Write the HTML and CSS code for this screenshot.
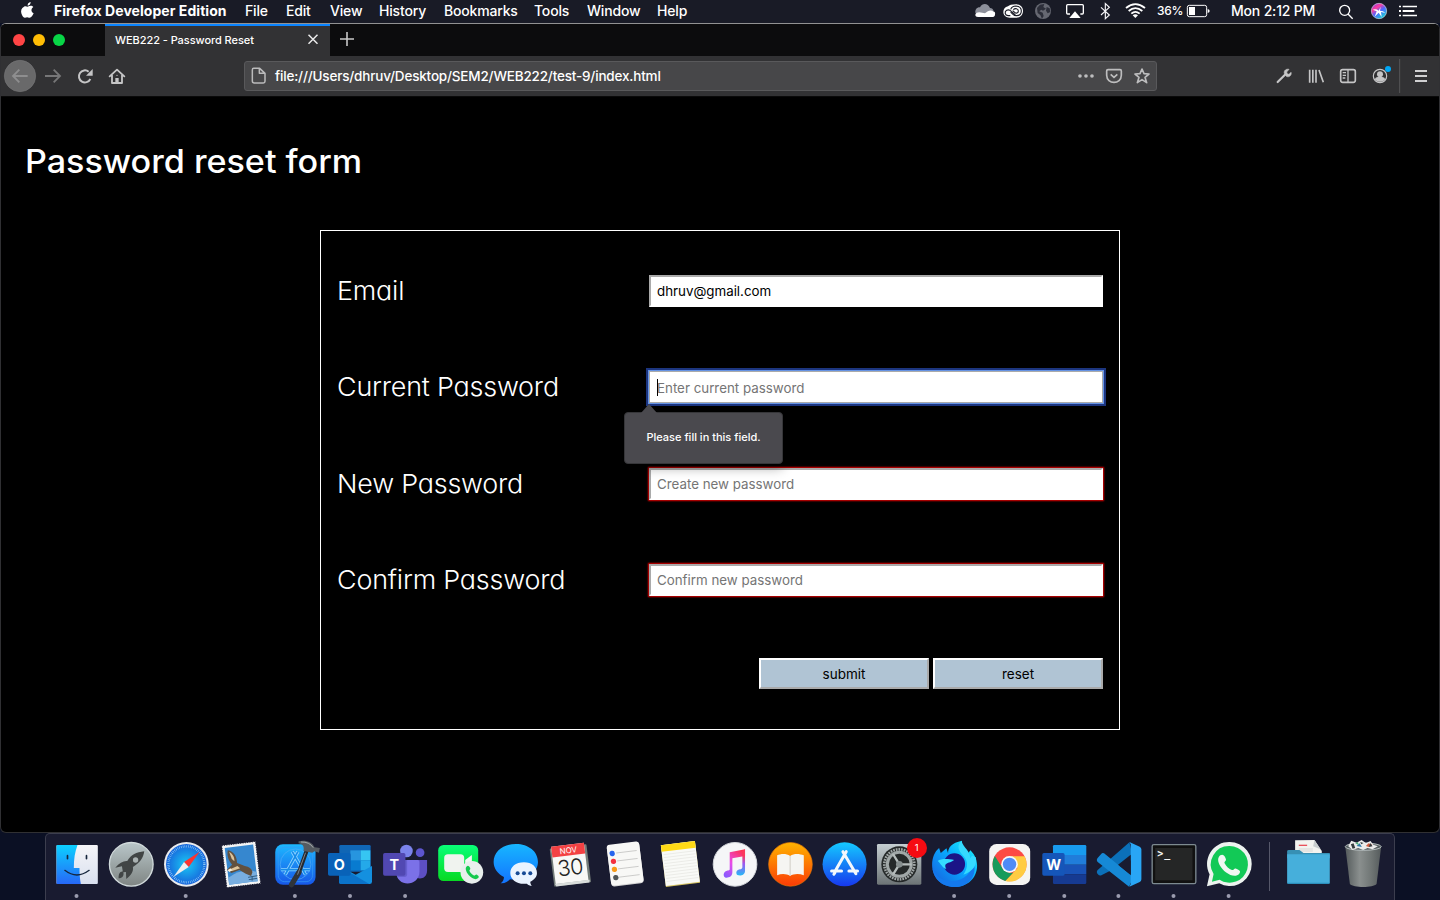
FILE: index.html
```html
<!DOCTYPE html>
<html lang="en">
<head>
<meta charset="utf-8">
<title>WEB222 - Password Reset</title>
<link rel="stylesheet" href="styles.css">
</head>
<body>
<header class="menubar">
  <svg class="apple" width="26" height="23" viewBox="45 0 78 69"><path fill="#fff" d="M83 20c-4-1-7-3-11 0-8 4-10 12-8 20 2 7 6 14 11 13 5-2 8-2 12 0 6 2 11-6 14-13-8-4-9-14-1-19-4-5-11-4-17-1zM83 17c-1-5 3-10 9-11 0 6-3 10-9 11z"/></svg>
  <nav class="menus">
    <b class="m-app">Firefox Developer Edition</b><span>File</span><span>Edit</span><span>View</span><span>History</span><span>Bookmarks</span><span>Tools</span><span>Window</span><span>Help</span>
  </nav>
  <div class="status">
    <svg width="28" height="23" viewBox="30 0 84 69"><path fill="#8d909b" d="M46 38c-1-10 6-17 14-16 7-14 24-13 30 2 6 0 9 3 11 9l-12 8-34 2z"/><path fill="#fff" d="M46 45c0-5 5-8 12-8l17 3c8-7 17-11 24-6 7 1 7 6 6 10 0 4-4 7-9 7H54c-5 0-8-2-8-6z"/></svg>
    <svg width="30" height="23" viewBox="114 0 90 69"><path fill="#fff" d="M144 19q5-6 24-6c14 0 21 9 21 20s-8 20-20 20h-20c-11 0-19-7-19-17 0-8 5-15 14-17z"/><g fill="none" stroke="#191b26" stroke-width="3.4"><path d="M166 45l-12-11c-5-5-10-5-14-3-7 4-6 15 4 16h7"/><path d="M152 28c3-8 9-10 16-10 10 1 16 7 16 15s-6 14-15 14c-5 0-7-1-10-4l-7-7M160 29c5-5 15-4 15 4 0 7-7 8-11 4l-6-5"/></g></svg>
    <svg width="32" height="23" viewBox="204 0 96 69"><circle cx="249" cy="33" r="24" fill="#666872"/><path fill="#2c2e39" d="M231 24l9-10 13-2-3 9 8 5-9 6-5-3-6 5 10 4 3 10-5 8-5-11-8-6zM260 21l9 4 2 11-8 4-5-8z"/></svg>
    <svg width="30" height="23" viewBox="300 0 90 69"><path fill="none" stroke="#fff" stroke-width="4" d="M330 42h-7q-3 0-3-3V17q0-3 3-3h44q3 0 3 3v22q0 3-3 3h-6"/><path fill="#fff" d="M345 34l17 20h-34z"/></svg>
    <svg width="30" height="23" viewBox="390 0 90 69"><path fill="none" stroke="#f4f4f7" stroke-width="3.500" d="M423 22l25 23-12 11V11l12 11-25 23"/></svg>
    <svg width="32" height="23" viewBox="480 0 96 69"><g fill="none" stroke="#fff" stroke-width="5.500"><path d="M498 24q28-23 57 0M506 33q20-17 41 0M514 41q12-11 25 0"/></g><path fill="#fff" d="M526 54l-8-8q8-6 16 0z"/></svg>
    <span class="battery">36%</span>
    <svg width="41" height="23" viewBox="675 0 123 69"><rect x="682" y="16" width="58" height="34" rx="6" fill="none" stroke="#fff" stroke-width="3"/><rect x="687" y="21" width="18" height="24" fill="#fff"/><path fill="#fff" d="M743 27q6 1 6 6t-6 6z"/></svg>
    <span class="clock">Mon 2:12 PM</span>
    <svg width="32" height="23" viewBox="1110 0 96 69"><g fill="none" stroke="#fff" stroke-width="4"><circle cx="1154" cy="31" r="15"/><path d="M1164 42l14 14"/></g></svg>
    <svg width="32" height="23" viewBox="1206 0 96 69"><defs><linearGradient id="siri" x1="0" x2=".7" y2="1"><stop stop-color="#6b3aff"/><stop offset=".35" stop-color="#ff3b9b"/><stop offset=".6" stop-color="#4e66ff"/><stop offset="1" stop-color="#17d6d3"/></linearGradient></defs><circle cx="1257" cy="33" r="23" fill="url(#siri)" stroke="#cfd2e5" stroke-width="2"/><path fill="#fff" d="M1238 29q11-3 18 3l6-12-2 12q10 0 16 7l-13-3 2 15-9-13-12 12 6-16z"/></svg>
    <svg width="30" height="23" viewBox="1302 0 90 69"><path fill="#fff" d="M1317 17h6v5h-6zM1328 17h43v5h-43zM1317 30h6v6h-6zM1328 30h35v6h-35zM1317 44h6v5h-6zM1328 44h43v5h-43z"/></svg>
  </div>
</header>

<main class="window">
  <div class="tabs">
    <div class="lights"><i class="red"></i><i class="amber"></i><i class="green"></i></div>
    <div class="tab"><span>WEB222 - Password Reset</span><svg width="12" height="12" viewBox="0 0 12 12"><path d="M1.500 .7l9 9M10.500 .7l-9 9" stroke="#e8e8e8" stroke-width="1.500"/></svg></div>
    <svg class="plus" width="16" height="16" viewBox="0 0 16 16"><path d="M8 1v14M1 8h14" stroke="#c8c8c8" stroke-width="1.600"/></svg>
  </div>
  <div class="toolbar">
    <svg width="36" height="40" viewBox="3 168 108 120"><circle cx="60" cy="228" r="47" fill="#69696a" stroke="#747475" stroke-width="2"/><path d="M83 228H39M58 209l-19 19 19 19" fill="none" stroke="#8e8e8f" stroke-width="5.500"/></svg>
    <svg width="32" height="40" viewBox="111 168 96 120"><path d="M135 228h45M161 209l19 19-19 19" fill="none" stroke="#777778" stroke-width="5.500"/></svg>
    <svg width="32" height="40" viewBox="207 168 96 120"><path d="M271 237a18 18 0 1 1-5-22" fill="none" stroke="#c5c5c6" stroke-width="6"/><path d="M278 207v20h-20z" fill="#c5c5c6"/></svg>
    <svg width="32" height="40" viewBox="303 168 96 120"><path d="M329 229l22-20 22 20M336 226v23h30v-23" fill="none" stroke="#c5c5c6" stroke-width="5.500" stroke-linejoin="round" stroke-linecap="round"/><path d="M346 249v-15h10v15" fill="#c5c5c6"/><circle cx="351" cy="226" r="2" fill="#c5c5c6"/></svg>
    <div class="url">
      <svg width="16" height="18" viewBox="754 202 48 54"><path d="M762 206h18l16 15v24q0 5-5 5h-27q-6 0-6-6v-33q0-5 4-5zM779 207v14h16" fill="none" stroke="#bbbbbc" stroke-width="4.500" stroke-linejoin="round"/></svg>
      <span>file:///Users/dhruv/Desktop/SEM2/WEB222/test-9/index.html</span>
      <svg class="actions" width="80" height="30" viewBox="345 183 240 90"><g fill="#bdbdbe"><circle cx="360" cy="228" r="5.500"/><circle cx="378" cy="228" r="5.500"/><circle cx="396" cy="228" r="5.500"/></g><path d="M444 209h36q4 0 4 4v13c0 28-44 28-44 0v-13q0-4 4-4zM452 223l10 9 10-9" fill="none" stroke="#bdbdbe" stroke-width="5"/><path d="M546 207l6 14 15 1-12 10 5 16-14-9-14 9 5-16-12-10 15-1z" fill="none" stroke="#bdbdbe" stroke-width="5" stroke-linejoin="round"/></svg>
    </div>
    <div class="tools">
      <svg width="32" height="40" viewBox="924 168 96 120"><path d="M953 246l22-22" stroke="#c5c5c6" stroke-width="6.500" stroke-linecap="round"/><path d="M973 220c-2-9 6-14 14-12l-7 8 2 6 5 1 6-6c3 9-6 16-14 12z" fill="#c5c5c6" stroke="#c5c5c6" stroke-width="2"/></svg>
      <svg width="32" height="40" viewBox="1020 168 96 120"><path d="M1049 209v39M1058.500 209v39M1068 209v39M1077 210l13 37" stroke="#c5c5c6" stroke-width="5"/></svg>
      <svg width="32" height="40" viewBox="1116 168 96 120"><rect x="1142" y="209" width="44" height="38" rx="6" fill="none" stroke="#c5c5c6" stroke-width="5"/><path d="M1164 209v38M1148 218h10M1148 226h10M1148 234h8" stroke="#c5c5c6" stroke-width="4"/></svg>
      <svg width="35" height="40" viewBox="1212 168 105 120"><circle cx="1260" cy="228" r="20" fill="none" stroke="#c5c5c6" stroke-width="3.500"/><circle cx="1260" cy="223" r="9" fill="#c5c5c6"/><path d="M1245 239q0-8 9-8h12q9 0 9 8-15 13-30 0z" fill="#c5c5c6"/><circle cx="1284" cy="207" r="9" fill="#00a7f5"/></svg>
      <svg width="40" height="40" viewBox="1317 168 120 120"><path d="M1319 177v102" stroke="#555557" stroke-width="3"/><path d="M1365 213h36M1365 228h36M1365 243h36" stroke="#d0d0d1" stroke-width="5.500"/></svg>
    </div>
  </div>

  <section class="page">
    <h1>Password reset form</h1>
    <form class="form" onsubmit="return false">
      <div class="row"><label for="email">Email</label><div class="field"><input id="email" type="text" value="dhruv@gmail.com"></div></div>
      <div class="row"><label for="cur">Current Password</label><div class="field focused"><input id="cur" type="text" placeholder="Enter current password"><i class="caret"></i><div class="tip">Please fill in this field.</div></div></div>
      <div class="row"><label for="new">New Password</label><div class="field invalid"><input id="new" type="text" placeholder="Create new password"></div></div>
      <div class="row"><label for="conf">Confirm Password</label><div class="field invalid"><input id="conf" type="text" placeholder="Confirm new password"></div></div>
      <div class="buttons"><button type="button">submit</button><button type="button">reset</button></div>
    </form>
  </section>
</main>

<footer class="desktop"><div class="dock">
  <svg class="app" viewBox="145.5 42 164.7 198"><defs><linearGradient id="fb" x2="0" y2="1"><stop stop-color="#0cd0ff"/><stop offset="1" stop-color="#2768f7"/></linearGradient><linearGradient id="fw" x2="0" y2="1"><stop stop-color="#f5f5f8"/><stop offset="1" stop-color="#d9e0ef"/></linearGradient></defs><rect x="168" y="75" width="124" height="117" rx="3" fill="url(#fw)"/><path fill="url(#fb)" d="M171 75h60c-8 22-11 42-11 69h17c0 18 1 32 4 48h-70q-3 0-3-3V78q0-3 3-3z"/><g fill="none" stroke="#15253c" stroke-width="4" stroke-linecap="round"><path d="M193 151q36 28 73 0"/><path d="M201 107v9M258 107v9" stroke-width="5"/></g><circle class="dot" cx="228" cy="228" r="6"/></svg>
  <svg class="app" viewBox="310.2 42 164.7 198"><defs><linearGradient id="rk" x2="0" y2="1"><stop stop-color="#b9c6c9"/><stop offset="1" stop-color="#7f8583"/></linearGradient></defs><circle cx="395" cy="133" r="65.500" fill="url(#rk)" stroke="#d1dadb" stroke-width="4"/><path fill="#414545" d="M434 94c-24 3-39 10-51 29-12-1-24 6-36 20l20-4 3 18 9-1 1 21c16-13 22-23 20-36 22-13 31-27 34-47zM371 155c-11-2-14 8-14 20 12-1 17-8 14-20z"/><circle cx="408" cy="120" r="8" fill="#aab2b2"/></svg>
  <svg class="app" viewBox="474.9 42 164.7 198"><defs><radialGradient id="sf"><stop stop-color="#19c9f4"/><stop offset="1" stop-color="#1765dc"/></radialGradient></defs><circle cx="560" cy="133" r="67" fill="#e9ebed"/><circle cx="560" cy="133" r="61" fill="url(#sf)"/><circle cx="560" cy="133" r="54" fill="none" stroke="#b2e5fd" stroke-width="7" stroke-dasharray="1.500 4"/><path fill="#fc3330" d="M600 95l-47 31 14 15z"/><path fill="#eee" d="M521 171l46-30-14-15z"/><circle class="dot" cx="558" cy="228" r="6"/></svg>
  <svg class="app" viewBox="639.6 42 164.7 198"><g transform="rotate(-7 725 133)"><rect x="673" y="70" width="102" height="127" fill="#f4f4f4"/><rect x="673" y="70" width="102" height="127" fill="none" stroke="#191b30" stroke-width="3" stroke-dasharray="3 4"/><rect x="681" y="78" width="86" height="111" fill="#3687cf"/><path fill="#78aee0" d="M681 168q45-25 86-7v28h-86z"/></g><path fill="#62503e" d="M684 91c18 3 27 18 28 38l23 9c13 2 21 8 23 18l-4 12-16-7-19-11-24 9-14-9 16-16c-11-12-16-27-13-43z"/><path fill="#ddc49c" d="M688 95c12 8 16 17 16 29l-8-7zM713 138l-29 13 13 2 24-8z"/><path fill="#f4efe3" d="M683 151l9-6 5 6-8 5z"/><path stroke="#315b80" stroke-width="3" fill="none" d="M745 172l28-5M747 179l25-4M757 168v14"/></svg>
  <svg class="app" viewBox="804.3 42 164.7 198"><defs><linearGradient id="xc" x2="0" y2="1"><stop stop-color="#1db8ff"/><stop offset="1" stop-color="#1757e8"/></linearGradient></defs><rect x="826" y="73" width="121" height="121" rx="23" fill="url(#xc)"/><rect x="835" y="82" width="103" height="103" rx="19" fill="none" stroke="#399cf1" stroke-width="2"/><circle cx="887" cy="133" r="46" fill="none" stroke="#55adf7" stroke-width="2"/><g fill="none" stroke="#8fd2ff" stroke-width="10"><path d="M894 95l-38 69M877 95l40 69M843 149h87"/><path stroke="#168be9" stroke-width="5" d="M894 95l-38 69M877 95l40 69M843 149h87"/></g><path d="M921 90l-22 62-24 43" fill="none" stroke="#24282f" stroke-width="12" stroke-linecap="round"/><path d="M897 157l-22 37" stroke="#2f343b" stroke-width="16" stroke-linecap="round"/><path stroke="#7c838a" stroke-width="3" d="M917 98l-24 66"/><path fill="#555b61" d="M896 64c19-6 42 1 48 18l16 2-3 14-13-4-7 4-26-5c2-14-1-20-15-23z"/><path stroke="#a6abad" stroke-width="3" fill="none" d="M903 66q26-1 37 17"/><circle class="dot" cx="885" cy="228" r="6"/></svg>
  <svg class="app" viewBox="9 42 164.7 198"><path fill="#1066b5" d="M62 75h86q4 0 4 4v76H58V79q0-4 4-4z"/><path fill="#2795df" d="M91 91h31v32H91z"/><path fill="#36c5f2" d="M122 91h29v30h-29z"/><path fill="#087bd0" d="M91 121h31v30H91z"/><path fill="#24a9e9" d="M122 121h29v30h-29z"/><path fill="#1490df" d="M57 137l50 27 49-26v47q0 7-7 7H64q-7 0-7-7z"/><path fill="#0b73ca" d="M57 139l91 53H64q-7 0-7-7z"/><rect x="24" y="99" width="68" height="68" rx="5" fill="#0962b8"/><text x="58" y="149" class="glyph" font-size="43">O</text><circle class="dot" cx="90" cy="228" r="6"/></svg>
  <svg class="app" viewBox="173.7 42 164.7 198"><circle cx="259" cy="93" r="19" fill="#7b83eb"/><circle cx="300" cy="98" r="13" fill="#5d55cf"/><path fill="#5d4fc4" d="M286 120h35v31c0 28-28 29-37 18z"/><path fill="#7b71e8" d="M229 120h64q5 0 5 5v30c0 45-69 49-70 0z"/><path fill="#5550b9" opacity=".55" d="M241 120h20v43q0 8-8 8h-22z"/><rect x="189" y="99" width="67" height="68" rx="5" fill="#5148b2"/><text x="222.500" y="149" class="glyph" font-size="43">T</text><circle class="dot" cx="255" cy="228" r="6"/></svg>
  <svg class="app" viewBox="338.4 42 164.7 198"><defs><linearGradient id="ft" x2="0" y2="1"><stop stop-color="#09ff78"/><stop offset="1" stop-color="#08d923"/></linearGradient></defs><rect x="354" y="75" width="120" height="108" rx="16" fill="url(#ft)"/><rect x="372" y="103" width="60" height="53" rx="11" fill="#f0f3ef"/><path fill="#f4f7f3" d="M435 120l20-15v47l-20-15z"/><circle cx="455" cy="157" r="34" fill="#e9efed"/><path fill="#16c94e" d="M440 139c4-5 8 2 10 5 2 5-4 5-2 9 3 6 7 10 12 13 5 3 6-5 10-2 4 3 9 5 3 11-6 6-19 0-27-9-10-12-12-22-6-27z"/></svg>
  <svg class="app" viewBox="503.1 42 164.7 198"><defs><linearGradient id="ms" x2="0" y2="1"><stop stop-color="#17b6ff"/><stop offset="1" stop-color="#1374ff"/></linearGradient></defs><path fill="url(#ms)" d="M587 72c-37 0-67 22-67 54 0 19 12 36 31 45 0 9-4 15-10 19 13 1 22-5 28-12 48 7 84-20 84-52 0-32-29-54-66-54z"/><path fill="#eaf3ff" d="M611 127c-25 0-41 14-41 32 0 20 21 36 50 32 4 4 8 6 15 6-4-3-5-8-5-12 12-6 20-14 20-26 0-18-15-32-39-32z"/><g fill="#174a95"><circle cx="592" cy="160" r="6"/><circle cx="611" cy="160" r="6"/><circle cx="630" cy="160" r="6"/></g></svg>
  <svg class="app" viewBox="667.8 42 164.7 198"><g transform="rotate(-7 749 133)"><rect x="694" y="79" width="111" height="115" rx="3" fill="#737c79"/><path fill="#d9dddb" d="M697 186h105l-2 8h-100z"/><rect x="699" y="74" width="99" height="112" fill="#f8f8f6"/><path fill="#f34143" d="M699 74h99v32h-99z"/><text x="749" y="99" class="glyph thin" font-size="24">NOV</text><text x="748" y="165" class="glyph day" font-size="65">30</text></g></svg>
  <svg class="app" viewBox="832.5 42 164.7 198"><g transform="rotate(-7 917 131)"><rect x="868" y="71" width="98" height="124" rx="9" fill="#d2d2d2"/><rect x="868" y="69" width="98" height="123" rx="9" fill="#f8f8f6"/><g stroke="#b9b9b8" stroke-width="2"><path d="M894 96h62M894 120h62M894 144h62M894 169h62"/></g><circle cx="882" cy="96" r="8" fill="#2764ed"/><circle cx="883" cy="120" r="8" fill="#f3313e"/><circle cx="883" cy="144" r="8" fill="#f79a18"/><circle cx="884" cy="169" r="8" fill="#515657"/></g></svg>
  <svg class="app" viewBox="37.2 42 164.7 198"><g transform="rotate(-7 122 132)"><rect x="71" y="69" width="103" height="126" fill="#d4c260"/><rect x="71" y="69" width="103" height="123" fill="#f9faf7"/><path fill="#ffda16" d="M71 69h103v20H71z"/><path stroke="#deded8" stroke-width="1.500" d="M75 98h96M75 107h96M75 116h96M75 125h96M75 134h96M75 143h96M75 152h96M75 161h96M75 170h96M75 179h96"/></g></svg>
  <svg class="app" viewBox="201.9 42 164.7 198"><defs><linearGradient id="mu" x1=".8" x2=".2" y2="1"><stop stop-color="#fe3150"/><stop offset=".55" stop-color="#e94be9"/><stop offset="1" stop-color="#8b5afe"/></linearGradient><linearGradient id="mr" x2="0" y2="1"><stop offset=".25" stop-color="#fb395c"/><stop offset=".55" stop-color="#9c57f1"/><stop offset="1" stop-color="#24baf7"/></linearGradient></defs><circle cx="286" cy="133" r="65.500" fill="#f5f6f8" stroke="#d4d7db" stroke-width="3"/><path fill="url(#mu)" d="M270 97l46-9v20l-38 7v42c0 13-11 17-20 16-7-1-9-14 0-19 5-3 12-1 12-6z"/><path fill="url(#mr)" d="M308 93l8-5v64c0 12-12 16-20 14-8-2-8-14 0-17 6-2 12-1 12-8z"/></svg>
  <svg class="app" viewBox="366.6 42 164.7 198"><defs><linearGradient id="bk" x2="0" y2="1"><stop stop-color="#ffb400"/><stop offset="1" stop-color="#fb3b06"/></linearGradient></defs><circle cx="452" cy="133" r="65.500" fill="url(#bk)" stroke="#e57905" stroke-width="2"/><path fill="#f5f5f2" d="M451 108c-12-9-29-7-39-2v60c13-6 29-5 39 2 10-7 27-8 41-2v-60c-12-5-29-7-41 2z"/><path stroke="#bfb9b0" stroke-width="2" d="M451 108v59"/></svg>
  <svg class="app" viewBox="531.3 42 164.7 198"><defs><linearGradient id="as" x2="0" y2="1"><stop stop-color="#14c9ff"/><stop offset="1" stop-color="#1738ee"/></linearGradient></defs><circle cx="614" cy="133" r="66" fill="url(#as)"/><g fill="none" stroke="#f5f8fc" stroke-width="9" stroke-linecap="round"><path d="M619 95l-33 58M609 95l39 66M575 153h30M627 153h26M582 163l3-5"/></g></svg>
  <svg class="app" viewBox="696 42 164.7 198"><defs><linearGradient id="st" x2="0" y2="1"><stop stop-color="#c5ced2"/><stop offset="1" stop-color="#6d7476"/></linearGradient></defs><rect x="711" y="72" width="133" height="122" rx="4" fill="url(#st)"/><circle cx="778" cy="133" r="54" fill="#252929"/><circle cx="778" cy="133" r="45" fill="none" stroke="#a0a6a6" stroke-width="8" stroke-dasharray="5 3"/><circle cx="778" cy="133" r="36" fill="none" stroke="#a0a7a7" stroke-width="9"/><path d="M778 133l-19-31M778 133h37M778 133l-19 31" stroke="#b5bcbb" stroke-width="7"/><circle cx="778" cy="133" r="10" fill="#858d8d"/><circle cx="831" cy="84" r="30" fill="#f60b12"/><text x="830" y="94" class="glyph thin" font-size="28">1</text></svg>
  <svg class="app" viewBox="20.7 42 164.7 198"><defs><linearGradient id="ff" x1="1" x2="0" y2="1"><stop stop-color="#20fdf5"/><stop offset=".45" stop-color="#08aaff"/><stop offset="1" stop-color="#1858db"/></linearGradient></defs><path fill="url(#ff)" d="M103 201c-38 0-67-28-67-66 0-22 8-41 21-51l5 15 17-14 5 15c-1-16 10-32 42-38-4 17 5 29 16 40l9-11c15 15 20 32 20 46 0 37-29 64-68 64z"/><path fill="#1479ed" d="M37 145c15 36 43 39 61 38 36-2 57-26 61-58 16 38-12 76-56 76-37 0-61-22-66-56z"/><circle cx="103" cy="132" r="32" fill="#1b1587"/><path fill="#35dbff" d="M53 123c8-8 32-7 49-3-7 7-17 7-23 11-6 3-3 12 0 16-12-3-17-16-26-24zM124 63c-16 15-8 30 6 45 13 14 16 32 0 56 30-10 42-30 37-52l-11-5-6 8c1-23-19-30-26-52z"/><circle class="dot" cx="102" cy="228" r="6"/></svg>
  <svg class="app" viewBox="185.4 42 164.7 198"><rect x="207" y="72" width="123" height="123" rx="22" fill="#f5f5f3"/><circle cx="268" cy="133" r="51" fill="#fc4b45"/><path fill="#ffcc42" d="M268 109h45a51 51 0 0 1-58 74l37-39z"/><path fill="#169b5b" d="M224 108l24 38c10 14 29 15 33 10l-26 27a51 51 0 0 1-31-75z"/><circle cx="268" cy="133" r="25" fill="#f5f8fb"/><circle cx="268" cy="133" r="20" fill="#4f8bf7"/><circle class="dot" cx="267" cy="228" r="6"/></svg>
  <svg class="app" viewBox="350.1 42 164.7 198"><path fill="#189bee" d="M402 75h92q4 0 4 4v26H398V79q0-4 4-4z"/><path fill="#207dda" d="M398 105h100v29H398z"/><path fill="#1953b7" d="M398 134h100v29H398z"/><path fill="#163a91" d="M398 163h100v25q0 4-4 4h-92q-4 0-4-4z"/><rect x="366" y="99" width="67" height="68" rx="5" fill="#1556b9"/><text x="400" y="149" class="glyph" font-size="43">W</text><circle class="dot" cx="432" cy="228" r="6"/></svg>
  <svg class="app" viewBox="514.8 42 164.7 198"><path fill="#0b70b9" d="M534 151l96-84 12 50-96 49q-5 3-12-5-4-4 0-10z"/><path fill="#1689d6" d="M534 115l12-14q3-4 8-1l88 72-13 28-95-75q-4-4 0-10z"/><path fill="#29a6f5" d="M630 66l31 14q5 3 5 8v90q0 6-5 8l-31 14 4-8v-119z"/><path fill="#191b30" d="M634 104l-38 30 38 30z"/><circle class="dot" cx="597" cy="228" r="6"/></svg>
  <svg class="app" viewBox="679.5 42 164.7 198"><rect x="698" y="74" width="131" height="117" rx="5" fill="#111" stroke="#7d8a90" stroke-width="4"/><rect x="707" y="84" width="112" height="97" fill="#252626"/><text x="713" y="110" class="prompt" font-size="30" textLength="39">&gt;_</text><circle class="dot" cx="762" cy="228" r="6"/></svg>
  <svg class="app" viewBox="184.2 42 164.7 198"><path fill="#edf3ef" d="M270 66a66 66 0 1 1-31 124l-37 9 8-36a66 66 0 0 1 60-97z"/><path fill="#12c956" d="M270 78a55 55 0 1 1-30 101l-23 6 5-23a55 55 0 0 1 48-84z"/><path fill="#f2f7f3" d="M242 106c9-6 15 2 17 12 1 6-6 7-4 12 5 10 13 17 22 20 6 2 6-7 13-4 9 4 15 7 9 15-14 17-47-3-59-26-7-14-5-23 2-29z"/><circle class="dot" cx="267" cy="228" r="6"/></svg>
  <i class="sep"></i>
  <svg class="app" viewBox="420.6 42 164.7 198"><path fill="#f3f3ef" d="M466 61l58-1 22 33v15h-80z"/><path fill="#c8cdce" d="M524 60l-4 19 22 9z"/><path stroke="#e8525c" stroke-width="4" d="M477 76h25"/><path stroke="#bbb" stroke-width="1.500" d="M477 87h42M477 93h42"/><path fill="#3790b4" d="M442 94q0-4 5-4h32l12 9h79v16H442z"/><path fill="#46afdb" d="M442 103h128v84q0 4-4 4H446q-4 0-4-4z"/><path fill="#2c8fbb" d="M442 188h128q0 4-4 4H446q-4 0-4-4z"/></svg>
  <svg class="app" viewBox="585.3 42 164.7 198"><defs><linearGradient id="tr"><stop stop-color="#555b5c"/><stop offset=".4" stop-color="#8a8f8e"/><stop offset=".7" stop-color="#727877"/><stop offset="1" stop-color="#555b5c"/></linearGradient></defs><path fill="url(#tr)" d="M616 79h108l-14 113c-10 12-70 12-80 0z"/><ellipse cx="670" cy="80" rx="54" ry="11" fill="#545d60" stroke="#b4bcbd" stroke-width="3"/><path fill="#ececec" d="M625 79l9-17 16 6 15-8 13 9 14-6 8 11 14 5-16 9-15-4-13 6-15-6-17 6z"/><path fill="#2d7bad" d="M650 78l9-8 7 11z"/><path fill="#d15b3e" d="M678 78l8-8 11 4-10 7z"/><path fill="#343b3e" d="M633 73l8-3 5 14-8 2zM691 69l7 10-11 2zM661 66l10 3-7 4z"/><path fill="#4eaa76" d="M646 70l8-4 3 10z"/></svg>
</div></footer>
</body>
</html>
```

FILE: styles.css
```css
* { box-sizing: border-box; }
body {
  margin: 0;
  width: 1440px;
  height: 900px;
  overflow: hidden;
  display: flex;
  flex-direction: column;
  background: #0b1024;
  color: #fff;
  font-family: Inter, "Liberation Sans", sans-serif;
}
svg { display: block; flex: none; }
.menubar { height: 23px; flex: none; display: flex; align-items: center; background: #191b26; font-size: 14px; white-space: nowrap; font-weight: 500; }
.apple { margin-left: 15px; }
.menus { display: grid; grid-template-columns: 191px 41px 44px 49px 65px 90px 53px 70px 40px; margin-left: 13px; line-height: 20px; padding-bottom: 2px; }
.menus span { letter-spacing: -.18px; }
.menus .m-app { font-weight: 700; letter-spacing: .05px; }
.status { display: flex; align-items: center; margin-left: auto; width: 470px; flex: none; }
.battery { width: 33px; padding: 0 0 2px 5px; font-size: 12px; letter-spacing: -.3px; }
.clock { width: 104px; padding: 0 0 2px 5px; letter-spacing: -.18px; }

.window {
  height: 810px;
  flex: none;
  overflow: hidden;
  background: #000;
  border: 1px solid #303033;
  border-top-color: #929292;
  border-radius: 6px;
}
.tabs { height: 32px; display: flex; align-items: center; background: #0c0c0d; }
.lights { width: 104px; padding-left: 12px; display: flex; gap: 8px; }
.lights i { width: 12px; height: 12px; border-radius: 50%; }
.red { background: #ff4545; }
.amber { background: #ffbd05; }
.green { background: #08d546; }
.tab { width: 225px; height: 32px; border-top: 2px solid #0a84ff; background: #323234; display: flex; align-items: center; justify-content: space-between; padding: 0 11px 2px 10px; font-size: 11px; font-weight: 500; letter-spacing: -.06px; }
.plus { margin: 0 0 2px 9px; }
.toolbar { height: 41px; border-bottom: 1px solid #0a0a0a; display: flex; align-items: center; background: #323234; }
.url { width: 913px; height: 30px; margin-left: 111px; display: flex; align-items: center; padding-left: 6px; background: #474749; border: 1px solid #59595b; border-radius: 3px; font-size: 13.500px; font-weight: 500; white-space: nowrap; }
.url span { margin-left: 8px; letter-spacing: -.18px; }
.actions { margin-left: auto; margin-right: 1px; }
.tools { display: flex; margin-left: 111px; }

.page { height: 735px; display: flex; flex-direction: column; padding: 45px 24px 0; }
h1 { align-self: flex-start; margin: 0; font-size: 32px; line-height: 40px; font-weight: 450; transform: scaleX(1.066); transform-origin: 0 0; }
.form { width: 800px; height: 500px; margin: 48px 0 0 295px; padding: 11.500px 16px 0; border: 1px solid #fff; }
.row { display: flex; align-items: center; height: 96.500px; }
.row label { width: 312px; padding-bottom: 1px; font-size: 26px; font-weight: 300; font-feature-settings: "cv11", "ss03"; letter-spacing: -.2px; transform: scaleX(1.035); transform-origin: 0 0; }
.field { position: relative; width: 454px; height: 32px; }
.field input { display: block; width: 100%; height: 100%; padding: 0 6px; border: 2px solid; border-color: #aaa #fff #fff #aaa; border-radius: 0; background: #fff; color: #000; font: 13.330px Inter, sans-serif; outline: none; }
.field input::placeholder { color: #757575; opacity: 1; }
.invalid input { box-shadow: 0 0 1.500px 1px #e00000; }
.focused input { border: 1px solid #aaa; padding: 1px 7px 0; box-shadow: 0 0 0 1px #6492e5, 0 0 0 3px #1c357f; }
.caret { position: absolute; left: 8px; top: 8px; width: 1px; height: 17px; background: #000; }
.tip { position: absolute; z-index: 1; left: -25px; top: 41px; width: 159px; height: 52px; display: flex; align-items: center; justify-content: center; padding-bottom: 2px; background: #4a494e; border: 1px solid #363639; border-radius: 4px; font-size: 11px; font-weight: 500; box-shadow: 0 4px 12px #0005; white-space: nowrap; }
.tip::before { content: ""; position: absolute; left: 16px; top: -9px; border: 8px solid transparent; border-top: 0; border-bottom: 9px solid #4a494e; }
.buttons { display: flex; justify-content: flex-end; gap: 4px; margin-top: 29.500px; }
.buttons button { width: 170px; height: 31px; padding: 0; border: 2px solid; border-color: #fff #aaa #aaa #fff; border-radius: 0; background: #b0c4d4; color: #000; font: 13.500px Inter, sans-serif; }

.desktop { height: 67px; flex: none; padding: 0 45px; }
.dock { display: flex; height: 67px; padding-left: 2.500px; background: #191b30; border: 1px solid #3c3e4e; border-bottom: 0; border-radius: 5px 5px 0 0; }
.app { width: 54.9px; height: 66px; overflow: visible; }
.dot { fill: #9b9caf; }
.glyph { fill: #fff; font-family: Inter, sans-serif; font-weight: 700; text-anchor: middle; }
.thin { font-weight: 400; }
.day { fill: #252525; font-weight: 300; letter-spacing: -2px; }
.prompt { fill: #f5f5f5; font-family: "DejaVu Sans Mono", monospace; font-weight: 700; }
.sep { flex: none; width: 24.4px; height: 49px; margin-top: 8px; background: linear-gradient(#56586a, #56586a) 13px 0 / 1px 100% no-repeat; }
```
